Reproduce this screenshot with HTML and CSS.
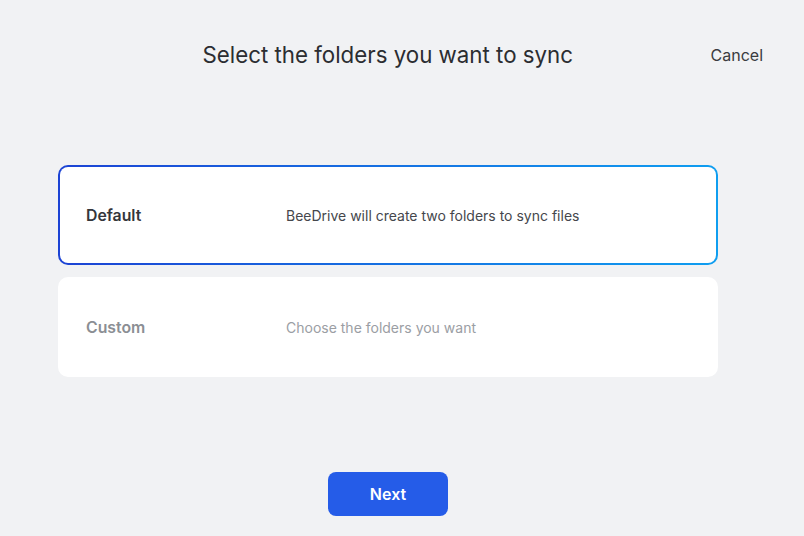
FILE: index.html
```html
<!DOCTYPE html>
<html>
<head>
<meta charset="utf-8">
<link rel="stylesheet" href="styles.css">
</head>
<body>
<div class="page">
  <header class="header">
    <h1 class="title">Select the folders you want to sync</h1>
    <div class="cancel">Cancel</div>
  </header>
  <div class="options">
    <div class="option selected">
      <div class="label">Default</div>
      <div class="desc">BeeDrive will create two folders to sync files</div>
    </div>
    <div class="option">
      <div class="label">Custom</div>
      <div class="desc">Choose the folders you want</div>
    </div>
  </div>
  <div class="actions">
    <button class="next">Next</button>
  </div>
</div>
</body>
</html>
```
FILE: styles.css
```css
html, body {
  margin: 0;
  padding: 0;
  background: #f1f2f4;
  font-family: Inter, "Noto Sans", sans-serif;
}
.page {
  display: grid;
  grid-template-columns: 58px 660px 1fr;
  grid-template-rows: auto auto auto;
  align-content: start;
  width: 804px;
  height: 536px;
}
.header {
  grid-column: 1 / -1;
  grid-row: 1;
  display: grid;
  grid-template-columns: 1fr auto;
  padding: 41px 41px 0 58px;
}
.title {
  margin: 0;
  padding-left: 7px;
  font-size: 22.3px;
  font-weight: 400;
  line-height: 28px;
  color: #2b2d31;
  text-align: center;
}
.cancel {
  padding-top: 4px;
  white-space: nowrap;
  font-size: 16px;
  line-height: 20px;
  color: #3a3c40;
}
.options {
  grid-column: 2;
  grid-row: 2;
  margin-top: 96px;
  display: flex;
  flex-direction: column;
  gap: 12px;
}
.option {
  box-sizing: border-box;
  height: 100px;
  border-radius: 10px;
  background: #fff;
  border: 2px solid transparent;
  display: flex;
  align-items: center;
  padding-left: 26px;
}
.option.selected {
  background: linear-gradient(#fff, #fff) padding-box,
              linear-gradient(90deg, #1c43d4, #0f9ef0) border-box;
}
.label {
  width: 200px;
  font-size: 15.8px;
  font-weight: 600;
  color: #34363b;
}
.desc {
  font-size: 14px;
  color: #45474c;
}
.option:not(.selected) .label {
  color: #8b8e94;
}
.option:not(.selected) .desc {
  color: #9b9ea4;
}
.actions {
  grid-column: 2;
  grid-row: 3;
  display: flex;
  justify-content: center;
  margin-top: 95px;
}
.next {
  width: 120px;
  height: 44px;
  border: none;
  border-radius: 8px;
  background: #255ce8;
  color: #fff;
  font-family: Inter, "Noto Sans", sans-serif;
  font-size: 16px;
  font-weight: 600;
}
```
